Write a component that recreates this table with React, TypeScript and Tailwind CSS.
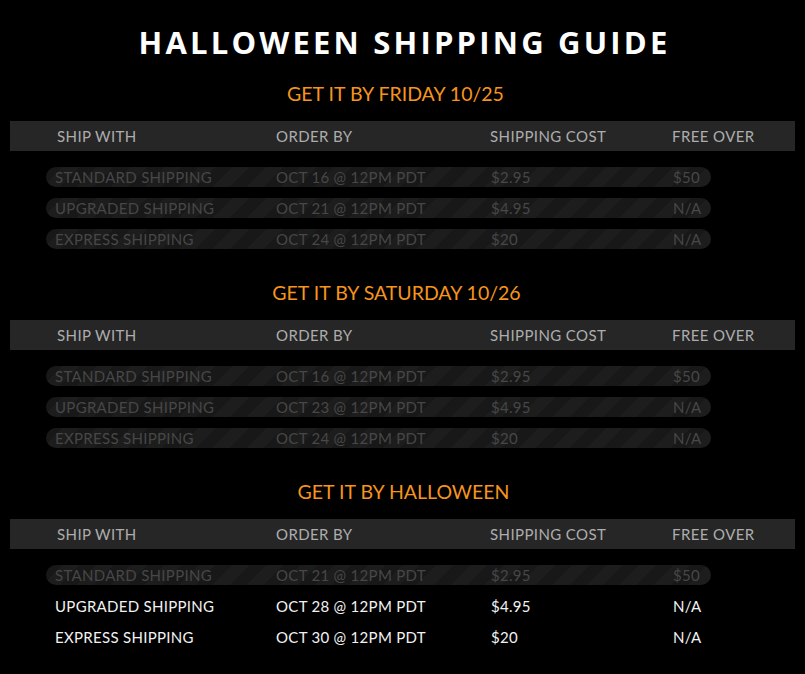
import React from "react";

type Row = { ship: string; order: string; cost: string; free: string; active?: boolean };

const sections: { title: string; shift: string; rows: Row[] }[] = [
  {
    title: "GET IT BY FRIDAY 10/25",
    shift: "pr-[14px]",
    rows: [
      { ship: "STANDARD SHIPPING", order: "OCT 16 @ 12PM PDT", cost: "$2.95", free: "$50" },
      { ship: "UPGRADED SHIPPING", order: "OCT 21 @ 12PM PDT", cost: "$4.95", free: "N/A" },
      { ship: "EXPRESS SHIPPING", order: "OCT 24 @ 12PM PDT", cost: "$20", free: "N/A" },
    ],
  },
  {
    title: "GET IT BY SATURDAY 10/26",
    shift: "pr-[12px]",
    rows: [
      { ship: "STANDARD SHIPPING", order: "OCT 16 @ 12PM PDT", cost: "$2.95", free: "$50" },
      { ship: "UPGRADED SHIPPING", order: "OCT 23 @ 12PM PDT", cost: "$4.95", free: "N/A" },
      { ship: "EXPRESS SHIPPING", order: "OCT 24 @ 12PM PDT", cost: "$20", free: "N/A" },
    ],
  },
  {
    title: "GET IT BY HALLOWEEN",
    shift: "pl-[2px]",
    rows: [
      { ship: "STANDARD SHIPPING", order: "OCT 21 @ 12PM PDT", cost: "$2.95", free: "$50" },
      { ship: "UPGRADED SHIPPING", order: "OCT 28 @ 12PM PDT", cost: "$4.95", free: "N/A", active: true },
      { ship: "EXPRESS SHIPPING", order: "OCT 30 @ 12PM PDT", cost: "$20", free: "N/A", active: true },
    ],
  },
];

const ShipRow: React.FC<{ row: Row }> = ({ row }) => {
  const cls = row.active
    ? "text-[#f2f2f2]"
    : "text-[#474747] rounded-full bg-[repeating-linear-gradient(135deg,#181818_0px,#181818_12px,#1d1d1d_12px,#1d1d1d_24px)]";
  return (
    <div className={`ml-[46px] w-[665px] h-[20px] pl-[9px] flex items-center text-[15px] tracking-[0.3px] ${cls}`}>
      <div className="w-[221px]">{row.ship}</div>
      <div className="w-[215px]">{row.order}</div>
      <div className="w-[182px]">{row.cost}</div>
      <div>{row.free}</div>
    </div>
  );
};

export default function App() {
  return (
    <div className="w-[805px] h-[674px] bg-black font-['Lato',sans-serif] pt-[22px]">
      <h1 className="h-[40px] pl-[4px] flex items-center justify-center text-white font-bold font-['Open_Sans',sans-serif] text-[31px] tracking-[3.2px]">
        HALLOWEEN SHIPPING GUIDE
      </h1>
      <div className="mt-[18px] flex flex-col gap-[30px]">
        {sections.map((s) => (
          <div key={s.title}>
            <h2 className={`h-[28px] flex items-center justify-center text-[#f7941d] text-[19.5px] ${s.shift}`}>{s.title}</h2>
            <div className="mt-[13px] mx-[10px] h-[30px] bg-[#262626] pl-[47px] flex items-center text-[15px] tracking-[0.4px] text-[#adadad]">
              <div className="w-[219px]">SHIP WITH</div>
              <div className="w-[214px]">ORDER BY</div>
              <div className="w-[182px]">SHIPPING COST</div>
              <div>FREE OVER</div>
            </div>
            <div className="mt-[16px] flex flex-col gap-[11px]">
              {s.rows.map((r) => (
                <ShipRow key={r.ship} row={r} />
              ))}
            </div>
          </div>
        ))}
      </div>
    </div>
  );
}
